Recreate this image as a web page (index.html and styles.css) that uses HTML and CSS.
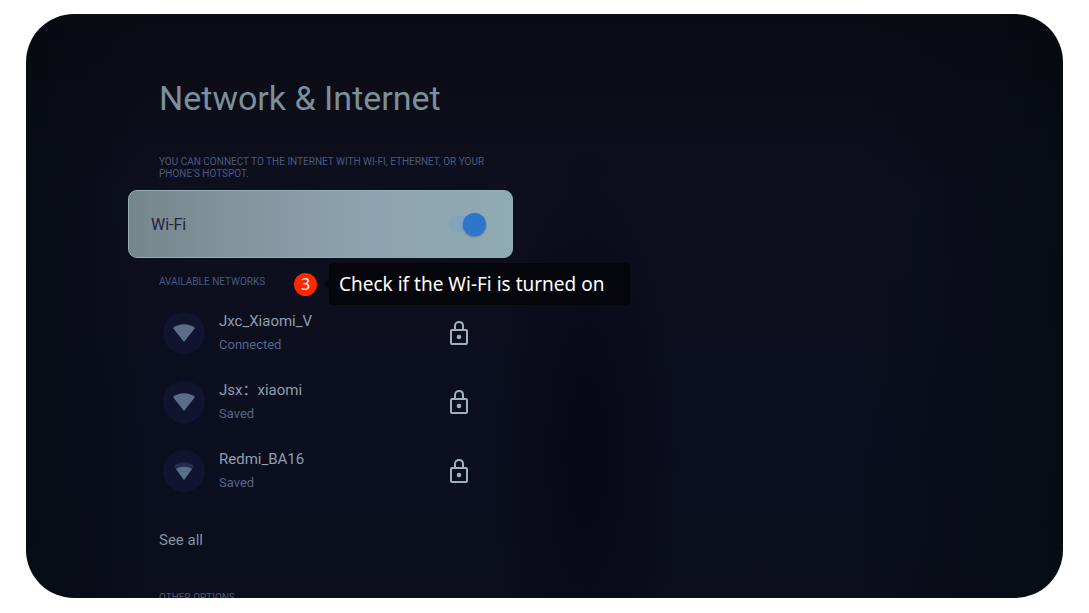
FILE: index.html
```html
<!DOCTYPE html>
<html lang="en">

<head>
    <meta charset="UTF-8">
    <meta name="viewport" content="width=device-width, initial-scale=1.0">
    <title>Network &amp; Internet</title>

    <link rel="stylesheet" href="styles.css">
</head>

<body>
<!-- shared icons -->
<svg class="icon-defs" aria-hidden="true">
    <symbol id="icon-wifi" viewBox="0 0 24 18">
        <path d="M1 4 C7 -1 17 -1 23 4 L12 18 Z" fill="currentColor"/>
    </symbol>
    <symbol id="icon-wifi-weak" viewBox="0 0 24 18">
        <path d="M2 4 C8 -1 16 -1 22 4 L12 18 Z" fill="#222e52"/>
        <path d="M4 7 C8 4 16 4 20 7 L12 18 Z" fill="currentColor"/>
    </symbol>
    <symbol id="icon-lock" viewBox="0 0 20 26">
        <rect x="2" y="10" width="16" height="14" rx="1" fill="none" stroke="currentColor" stroke-width="2"/>
        <path d="M6 10 V6 C6 0.7 14 0.7 14 6 V10" fill="none" stroke="currentColor" stroke-width="2"/>
        <circle cx="10" cy="17" r="2.3" fill="currentColor"/>
    </symbol>
</svg>

<main class="screen">
    <div class="settings">
        <h1 class="title">Network &amp; Internet</h1>
        <p class="caption">YOU CAN CONNECT TO THE INTERNET WITH WI-FI, ETHERNET, OR YOUR PHONE'S HOTSPOT.</p>

        <div class="wifi-card">
            <label for="wifi">Wi-Fi</label>
            <input type="checkbox" id="wifi" class="switch" checked>
            <div class="callout">
                <span class="step">3</span>
                <span class="tip">Check if the Wi-Fi is turned on</span>
            </div>
        </div>

        <h2 class="caption networks-title">AVAILABLE NETWORKS</h2>
        <div class="network-list">
            <button class="network">
                <span class="signal"><svg><use href="#icon-wifi"/></svg></span>
                <span class="network-text">
                    <span class="name">Jxc_Xiaomi_V</span>
                    <span class="status">Connected</span>
                </span>
                <svg class="lock"><use href="#icon-lock"/></svg>
            </button>
            <button class="network">
                <span class="signal"><svg><use href="#icon-wifi"/></svg></span>
                <span class="network-text">
                    <span class="name">Jsx：xiaomi</span>
                    <span class="status">Saved</span>
                </span>
                <svg class="lock"><use href="#icon-lock"/></svg>
            </button>
            <button class="network">
                <span class="signal"><svg><use href="#icon-wifi-weak"/></svg></span>
                <span class="network-text">
                    <span class="name">Redmi_BA16</span>
                    <span class="status">Saved</span>
                </span>
                <svg class="lock"><use href="#icon-lock"/></svg>
            </button>
        </div>
        <button class="see-all">See all</button>

        <h2 class="caption">OTHER OPTIONS</h2>
    </div>
</main>
</body>

</html>
```
FILE: styles.css
```css
* {
    box-sizing: border-box;
}

body {
    height: 100vh;
    margin: 0;
    padding: 14px 26px 15px;
    background-color: #fff;
    font-family: Roboto, "Noto Sans CJK SC", sans-serif;
}

button {
    padding: 0;
    border: none;
    background: none;
    font-family: inherit;
    text-align: left;
}

.icon-defs {
    display: none;
}

.screen {
    height: 100%;
    padding: 60px 102px 0;
    border-radius: 48px;
    background:
        linear-gradient(90deg, rgba(4, 10, 13, 0.6), rgba(4, 10, 13, 0) 12%, rgba(4, 10, 13, 0) 80%, rgba(4, 10, 13, 0.6)),
        radial-gradient(ellipse 9% 55% at 54% 75%, rgba(3, 4, 14, 0.6), rgba(3, 4, 14, 0)),
        linear-gradient(#0a0b12, #0d0f1e 30%, #0b0e1f 75%, #0c0e1c);
    overflow: hidden;
}

.settings {
    width: 100%;
    max-width: 385px;
}

.title {
    margin: 0 0 34px 31px;
    color: #7c8f9a;
    font-size: 34px;
    font-weight: 400;
    line-height: 48px;
}

.caption {
    margin: 0 20px 0 31px;
    color: #485a80;
    font-size: 10px;
    font-weight: 400;
    line-height: 12px;
}

.wifi-card {
    display: flex;
    position: relative;
    align-items: center;
    justify-content: space-between;
    height: 68px;
    margin: 10px 0 18px;
    padding: 0 26px 0 22px;
    border: 1px solid #9aacb5;
    border-radius: 9px;
    background: linear-gradient(90deg, #75868b, #8799a4 40%, #8ea3b1 65%, #8fabb5);
    color: #20253d;
    font-size: 16px;
}

/* switch */
.switch {
    display: flex;
    align-items: center;
    width: 37px;
    height: 23px;
    margin: 0;
    appearance: none;
}

.switch::before {
    content: "";
    width: 28px;
    height: 16px;
    border-radius: 8px;
    background-color: #7ea4be;
}

.switch::after {
    content: "";
    width: 23px;
    height: 23px;
    margin-left: -14px;
    border-radius: 50%;
    background-color: #2d76c9;
    box-shadow: 0 1px 2px rgba(40, 70, 110, 0.5);
}

/* step hint that lies over the list */
.callout {
    display: flex;
    position: absolute;
    top: 72px;
    left: 165px;
    align-items: center;
    gap: 12px;
    color: #fff;
    font-family: "Noto Sans", sans-serif;
    white-space: nowrap;
}

.step {
    width: 23px;
    height: 23px;
    border-radius: 50%;
    background-color: #ff2600;
    font-size: 16px;
    line-height: 23px;
    text-align: center;
}

.tip {
    position: relative;
    padding: 0 26px 0 10px;
    border-radius: 4px;
    background-color: #05060b;
    font-size: 19px;
    line-height: 42px;
}

.tip::before {
    content: "";
    position: absolute;
    top: 16px;
    left: -5px;
    border: 5px solid transparent;
    border-left: none;
    border-right-color: #05060b;
}

/* network list */
.networks-title {
    margin-bottom: 10px;
}

.network {
    display: flex;
    align-items: center;
    width: 100%;
    height: 69px;
    padding: 0 44px 0 35px;
}

.signal {
    display: flex;
    align-items: center;
    justify-content: center;
    width: 42px;
    height: 42px;
    border-radius: 50%;
    background-color: #10142e;
    color: #5b6e88;
}

.signal svg {
    width: 24px;
    height: 18px;
}

.network-text {
    display: flex;
    flex: 1;
    flex-direction: column;
    gap: 4px;
    padding-left: 14px;
}

.name {
    color: #8f9db0;
    font-size: 15px;
    line-height: 20px;
}

.status {
    color: #53658b;
    font-size: 13px;
    line-height: 20px;
}

.lock {
    width: 20px;
    height: 26px;
    color: #9fb0ba;
}

.see-all {
    display: block;
    width: 100%;
    height: 69px;
    margin-bottom: 18px;
    padding-left: 31px;
    color: #8492a2;
    font-size: 15px;
}
```
